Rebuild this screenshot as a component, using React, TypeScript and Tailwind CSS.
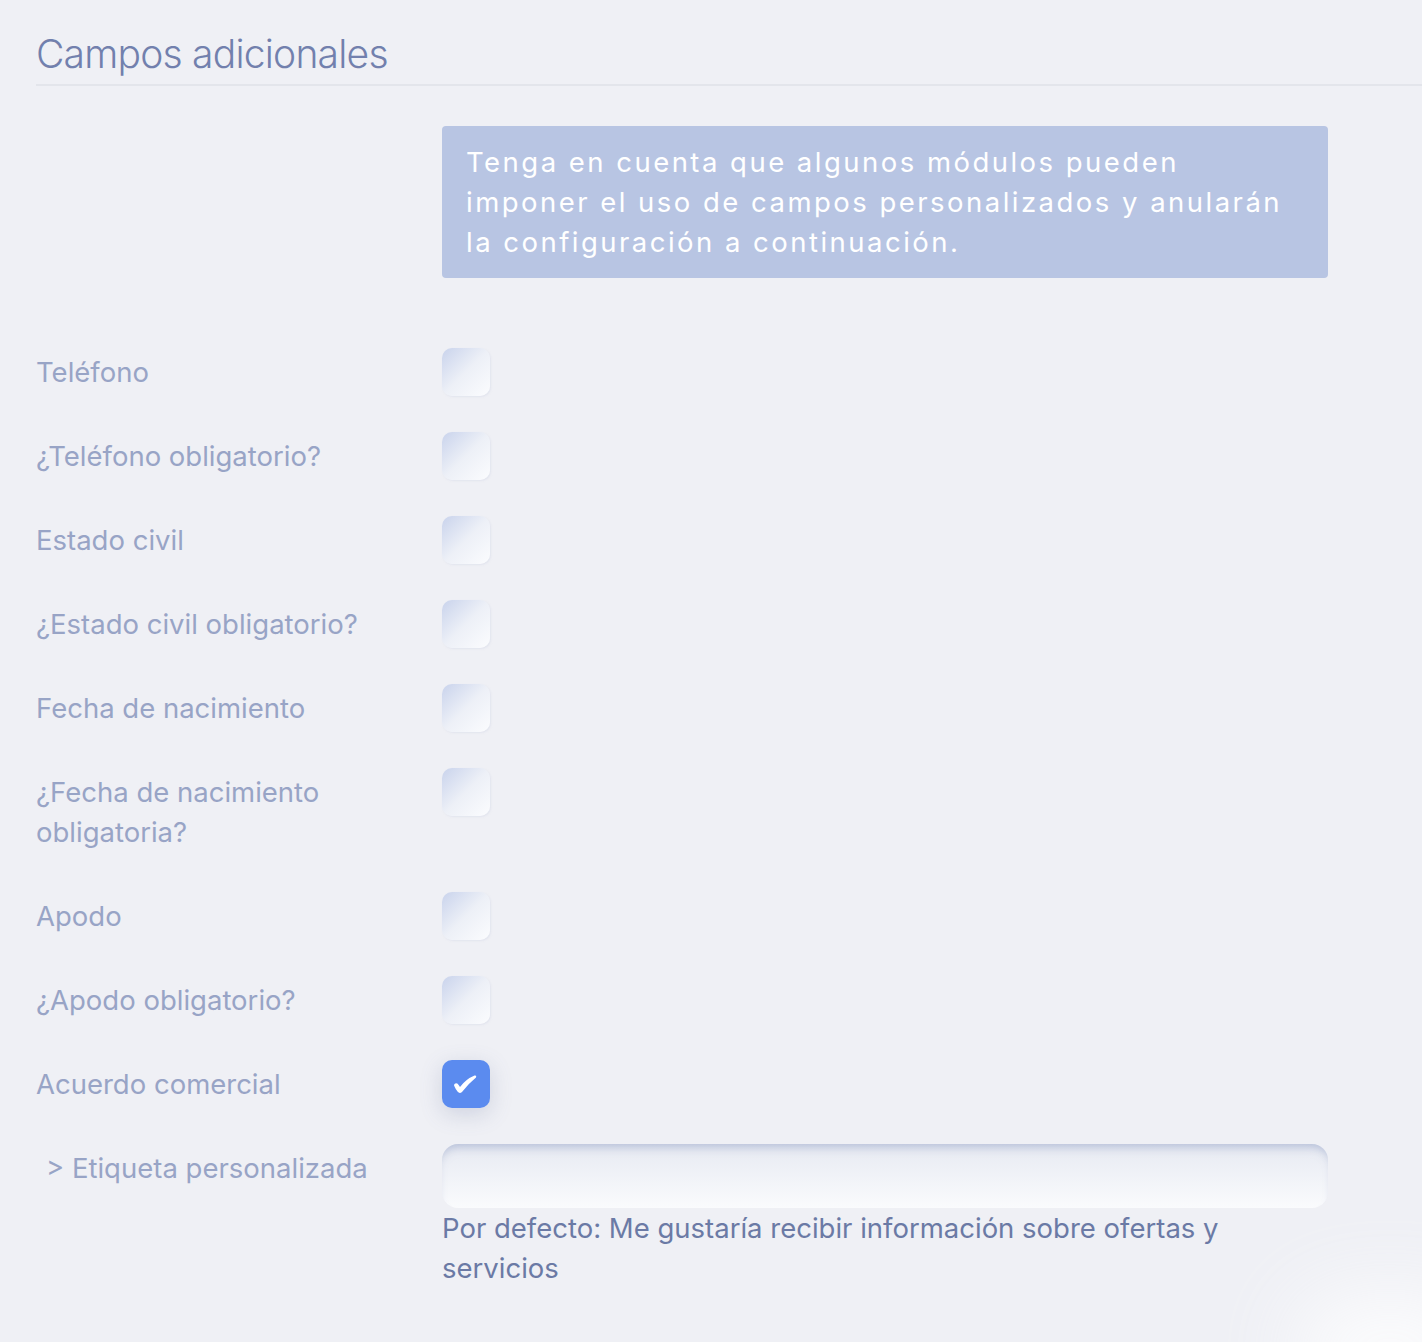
const font = { fontFamily: 'Inter, "Noto Sans", sans-serif' }

type Field = { label: string; checked?: boolean }

const fields: Field[] = [
  { label: 'Teléfono' },
  { label: '¿Teléfono obligatorio?' },
  { label: 'Estado civil' },
  { label: '¿Estado civil obligatorio?' },
  { label: 'Fecha de nacimiento' },
  { label: '¿Fecha de nacimiento obligatoria?' },
  { label: 'Apodo' },
  { label: '¿Apodo obligatorio?' },
  { label: 'Acuerdo comercial', checked: true },
]

function Checkbox({ checked }: { checked?: boolean }) {
  if (checked) {
    return (
      <div className="w-12 h-12 rounded-[10px] bg-[#5b8bef] shadow-[0_6px_22px_rgba(90,105,150,0.22)]">
        <svg width="48" height="48" viewBox="0 0 48 48">
          {/* heavy check, thicker on the short stroke */}
          <path
            d="M12.5 24 Q15 22 17 25.5 L18 27 Q24 19 32.5 15.5 Q35 15 34 17.5 Q26 24 20 32 Q17.5 34 15.5 31.5 Q13 28 12.5 26.5 Q11.5 25 12.5 24 Z"
            fill="#fff"
          />
        </svg>
      </div>
    )
  }
  return (
    <div className="w-12 h-12 rounded-[10px] bg-gradient-to-br from-[#c9d3ec] via-[#edf0f7] to-[#fbfcfe] shadow-[1px_1px_2px_rgba(200,207,225,0.35)]" />
  )
}

export default function App() {
  return (
    <div className="min-h-[1342px] bg-[#eff0f5] overflow-hidden relative" style={font}>
      <div className="pl-9 pt-[30px]">
        <h2 className="text-[39px] leading-[48px] font-light text-[#7280ad] tracking-[-0.02em] pb-1.5 border-b-2 border-[#e3e5eb]">
          Campos adicionales
        </h2>

        <div className="flex mt-10">
          <div className="w-[406px] shrink-0" />
          <div className="w-[886px] bg-[#b8c5e3] rounded px-6 py-4 text-white text-[27.5px] leading-10 tracking-[0.09em]">
            Tenga en cuenta que algunos módulos pueden imponer el uso de campos personalizados y anularán la configuración a continuación.
          </div>
        </div>

        <div className="mt-[70px]">
          {fields.map((f) => (
            <div key={f.label} className="flex items-start mb-9">
              <div className="w-[406px] shrink-0 py-1 pr-16 text-[27.5px] leading-10 text-[#98a4c6]">
                {f.label}
              </div>
              <Checkbox checked={f.checked} />
            </div>
          ))}

          <div className="flex items-start">
            <div className="w-[406px] shrink-0 py-1 pl-2.5 text-[27.5px] leading-10 text-[#98a4c6]">
              &gt; Etiqueta personalizada
            </div>
            <div className="w-[886px]">
              <div className="h-16 rounded-2xl bg-gradient-to-b from-[#e7eaf2] to-[#fafbfd] shadow-[inset_0_8px_10px_-5px_rgba(140,155,195,0.55)]" />
              <p className="text-[27.5px] leading-10 text-[#6b7aa5] pr-20">
                Por defecto: Me gustaría recibir información sobre ofertas y servicios
              </p>
            </div>
          </div>
        </div>
      </div>
      <div className="absolute -right-16 -bottom-16 w-48 h-28 rounded-full bg-white blur-2xl opacity-80" />
    </div>
  )
}
